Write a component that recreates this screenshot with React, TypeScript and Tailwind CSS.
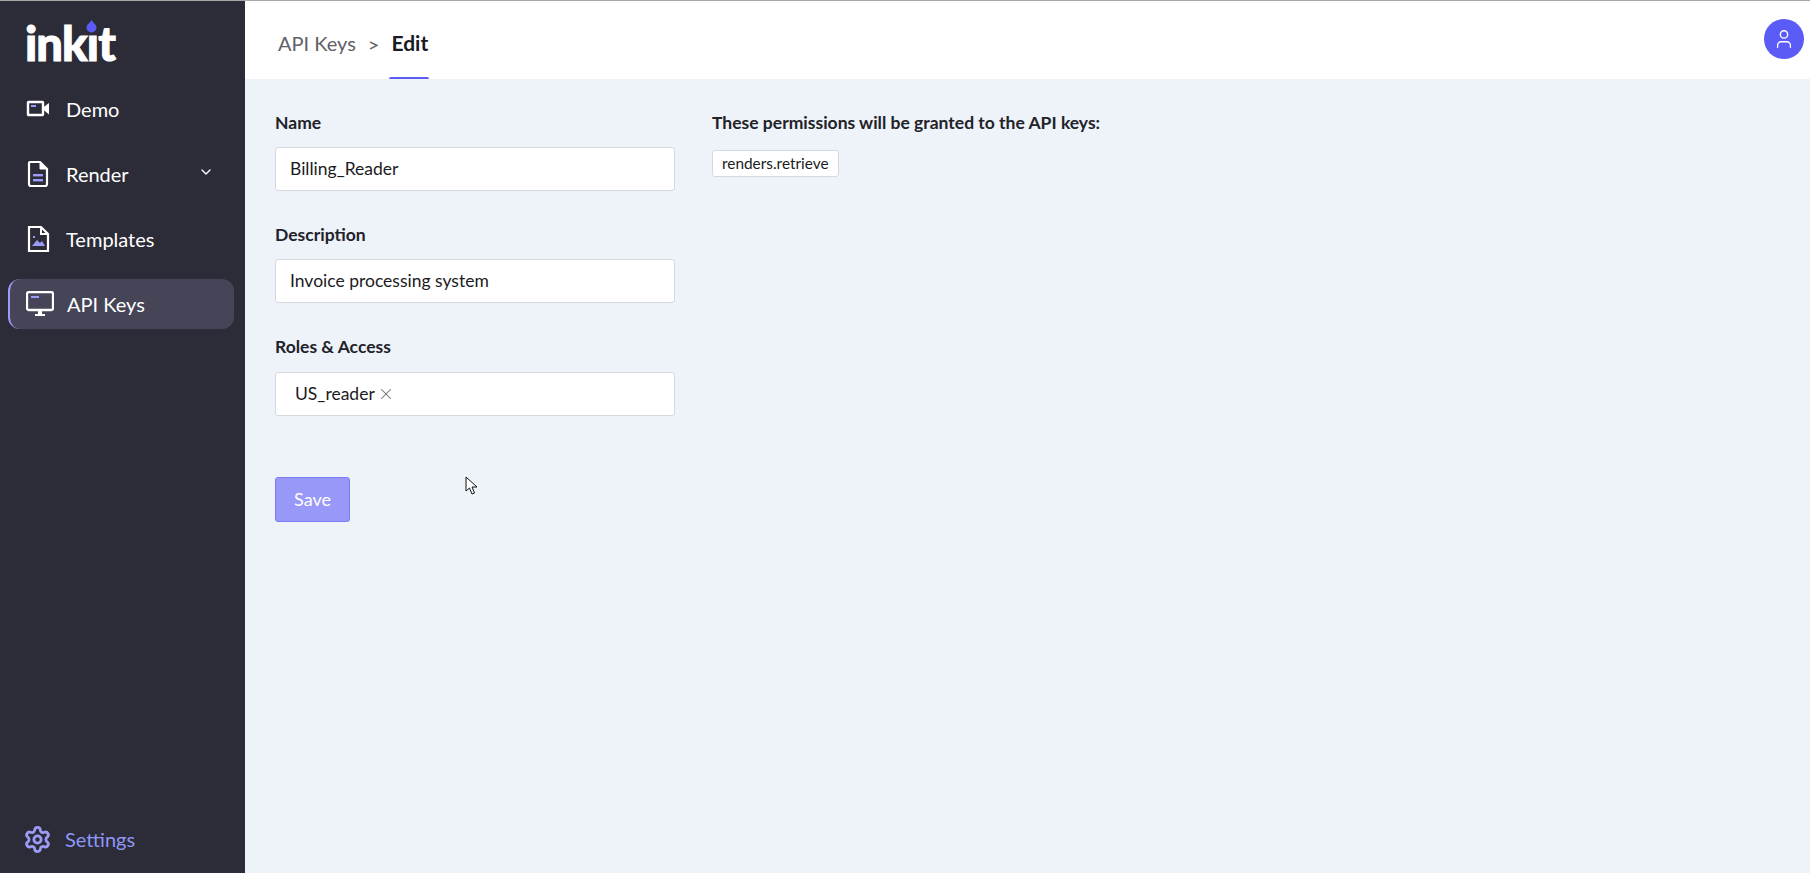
import { ChevronDown, Settings, User, X } from "lucide-react";

const font = { fontFamily: "Lato, sans-serif" };

function VideoIcon() {
  return (
    <svg width="24" height="24" viewBox="0 0 24 24" fill="none">
      <rect x="2" y="5" width="15" height="13" stroke="white" strokeWidth="2.4" rx="0.5" />
      <rect x="5" y="8" width="5" height="2" fill="#9c9cf8" />
      <path d="M17 10.5 L23 6 V17.5 L17 12.5 Z" fill="white" />
    </svg>
  );
}

function DocIcon() {
  return (
    <svg width="24" height="28" viewBox="0 0 24 28" fill="none">
      <path d="M4 2 H14 L21 9 V24 Q21 26 19 26 H5 Q3 26 3 24 V3 Q3 2 4 2 Z" stroke="white" strokeWidth="2.2" />
      <path d="M14 2 V9 H21" fill="white" stroke="white" strokeWidth="1" />
      <rect x="7" y="14" width="10" height="2.4" fill="#9c9cf8" />
      <rect x="7" y="19" width="10" height="2.4" fill="#9c9cf8" />
    </svg>
  );
}

function ImageDocIcon() {
  return (
    <svg width="24" height="28" viewBox="0 0 24 28" fill="none">
      <path d="M3 2 H15 L22 9 V26 H3 Z" stroke="white" strokeWidth="2.2" />
      <path d="M15 2 V9 H22" stroke="white" strokeWidth="2" />
      <rect x="7" y="11" width="2" height="2" fill="#9c9cf8" />
      <path d="M6 21 L11 15 L14 18 L16 16 L19 21 Z" fill="#9c9cf8" />
    </svg>
  );
}

function MonitorIcon() {
  return (
    <svg width="28" height="26" viewBox="0 0 28 26" fill="none">
      <rect x="1" y="1" width="26" height="18" rx="2" stroke="white" strokeWidth="2.3" />
      <rect x="5" y="5" width="8" height="2" fill="#9c9cf8" />
      <rect x="12" y="20" width="4" height="3" fill="white" />
      <rect x="9" y="23" width="10" height="2" fill="white" />
    </svg>
  );
}

function Logo() {
  return (
    <div className="relative ml-[25px] h-[46px] w-[94px]">
      <span className="block text-[47px] leading-[46px] font-black tracking-[-0.9px] text-white [-webkit-text-stroke:1px_white]">
        inkit
      </span>
      {/* droplet sits where the second i has its dot */}
      <svg className="absolute top-0 left-[60px]" width="13" height="14" viewBox="0 0 13 14">
        <rect width="13" height="14" fill="#2c2b38" />
        <path d="M6.5 0 C8 3 11.5 4.5 11.5 7.5 A5 5 0 0 1 1.5 7.5 C1.5 4.5 5 3 6.5 0 Z" fill="#5b5bf6" />
      </svg>
    </div>
  );
}

function NavItem({ icon, label, active, chevron }: { icon: React.ReactNode; label: string; active?: boolean; chevron?: boolean }) {
  return (
    <div
      className={`mr-[11px] ml-2 flex h-[50px] items-center rounded-xl pr-5 text-[20px] text-white ${
        active ? "border-l-2 border-[#9c9cf8] bg-[#454557] pl-4" : "pl-[18px]"
      }`}
    >
      <span className={`flex shrink-0 items-center ${active ? "w-[41px]" : "w-[40px]"}`}>{icon}</span>
      <span className="flex-1">{label}</span>
      {chevron && <ChevronDown size={16} strokeWidth={2} className="mb-1 text-white" />}
    </div>
  );
}

function Field({ label, value }: { label: string; value: string }) {
  return (
    <div className="mb-[30px]">
      <p className="mb-[11px] pt-[1px] text-[17.5px] leading-[26px] font-bold text-[#222228]">{label}</p>
      <div className="flex h-[44px] w-[400px] items-center rounded-[3px] border border-[#d6d8e0] bg-white px-[14px] text-[17.5px] text-[#1b1b22]">
        {value}
      </div>
    </div>
  );
}

export default function App() {
  return (
    <div className="flex h-[873px] w-[1810px] overflow-hidden border-t border-[#a8a8a8] bg-[#eef2f9]" style={font}>
      <aside className="flex w-[245px] shrink-0 flex-col bg-[#2c2b38] pt-[19px] pb-[9px]">
        <Logo />
        <nav className="mt-[18px] flex flex-col gap-[15px]">
          <NavItem icon={<VideoIcon />} label="Demo" />
          <NavItem icon={<DocIcon />} label="Render" chevron />
          <NavItem icon={<ImageDocIcon />} label="Templates" />
          <NavItem icon={<MonitorIcon />} label="API Keys" active />
        </nav>
        <div className="mt-auto flex h-[50px] items-center pl-[23px] text-[20px] text-[#8f97f5]">
          <Settings size={29} strokeWidth={2.3} className="mr-[13px] text-[#9c9cf8]" />
          Settings
        </div>
      </aside>

      <div className="flex flex-1 flex-col">
        <header className="flex h-[78px] items-center bg-white pr-[6px] pl-[33px]">
          <span className="pt-[6px] text-[20px] text-[#5f6068]">API Keys</span>
          <span className="mx-[12px] pt-[8px] text-[20px] text-[#5f6068]">&gt;</span>
          <span className="relative flex h-full items-center pt-[6px] text-[21px] font-bold text-[#1a1a24]">
            Edit
            <span className="absolute right-[-1px] bottom-0 left-[-2px] h-[2px] rounded-t bg-[#5b5bf6]" />
          </span>
          <span className="mb-[2px] ml-auto flex h-10 w-10 items-center justify-center rounded-full bg-[#5b5bf6]">
            <User size={22} strokeWidth={1.5} className="text-white" />
          </span>
        </header>

        <main className="flex gap-[37px] px-[30px] pt-[30px]">
          <div>
            <Field label="Name" value="Billing_Reader" />
            <Field label="Description" value="Invoice processing system" />
            <div>
              <p className="mb-[12px] pt-[1px] text-[17.5px] leading-[26px] font-bold text-[#222228]">Roles &amp; Access</p>
              <div className="flex h-[44px] w-[400px] items-center rounded-[3px] border border-[#d6d8e0] bg-white pl-[19px] text-[17.5px] text-[#1b1b22]">
                US_reader
                <X size={18} strokeWidth={1.4} className="ml-[2px] text-[#6d6d78]" />
              </div>
            </div>
            <button className="mt-[61px] h-[45px] w-[75px] rounded-[3px] border border-[#7c7cf5] bg-[#9898f8] text-[18px] text-white">
              Save
            </button>
          </div>
          <div>
            <p className="pt-[1px] text-[17.5px] leading-[26px] font-bold text-[#222228]">These permissions will be granted to the API keys:</p>
            <span className="mt-[14px] inline-block rounded-[3px] border border-[#d6d8e0] bg-white px-[9px] text-[15.4px] leading-[25px] text-[#1b1b22]">
              renders.retrieve
            </span>
          </div>
        </main>
      </div>

      {/* mouse pointer caught in the capture */}
      <svg className="absolute top-[476px] left-[465px]" width="14" height="20" viewBox="0 0 14 20">
        <path d="M1 1 V15 L4.5 12 L7 18 L9.5 17 L7 11 H12 Z" fill="white" stroke="#111" strokeWidth="1" />
      </svg>
    </div>
  );
}
